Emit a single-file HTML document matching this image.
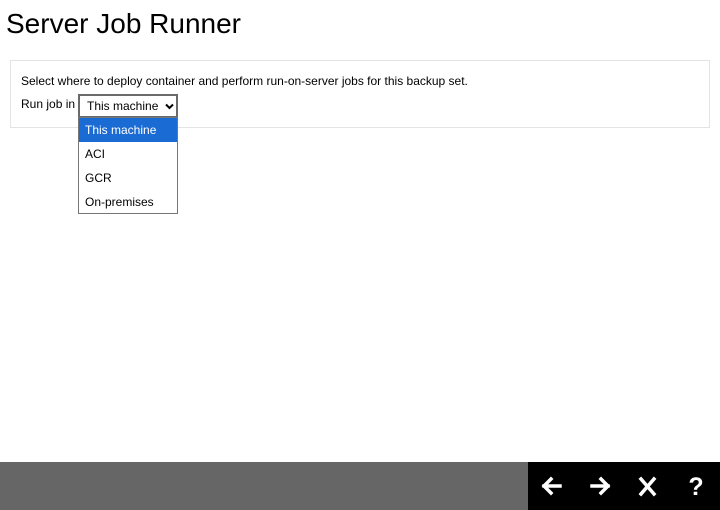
<!DOCTYPE html>
<html><head><style>
*{margin:0;padding:0;box-sizing:border-box}
body{width:720px;height:510px;background:#fff;position:relative;overflow:hidden;font-family:"Liberation Sans",Arial,sans-serif;color:#000}
.a{position:absolute;white-space:nowrap}
h1{position:absolute;left:6px;top:8px;font-size:28px;font-weight:normal;line-height:32px}
.box{position:absolute;left:10px;top:60px;width:700px;height:68px;border:1px solid #e4e4e4}
.sel{position:absolute;left:78px;top:94px;width:100px;height:24px;border:2px solid #6a6a6a;background:#fff;font-size:12px;line-height:20px;padding-left:7px}
.list{position:absolute;left:78px;top:117px;width:100px;height:97px;border:1px solid #767676;background:#fff}
.it{position:absolute;left:0;width:98px;height:24px;font-size:12px;line-height:24px;padding-left:6px}
.foot{position:absolute;left:0;top:462px;width:720px;height:48px;background:#666}
.blk{position:absolute;left:528px;top:462px;width:192px;height:48px;background:#000}
</style></head><body>
<h1>Server Job Runner</h1>
<div class="box"></div>
<div class="a" style="left:21px;top:74px;font-size:12px">Select where to deploy container and perform run-on-server jobs for this backup set.</div>
<div class="a" style="left:21px;top:97px;font-size:12px">Run job in</div>
<div class="sel">This machine<svg style="position:absolute;right:2px;top:7px" width="9" height="7" viewBox="0 0 9 7"><path d="M1 1.5L4.5 5 8 1.5" fill="none" stroke="#000" stroke-width="2"/></svg></div>
<div class="list">
<div class="it" style="top:0;background:#1a6bd4;color:#fff;">This machine</div>
<div class="it" style="top:24px">ACI</div>
<div class="it" style="top:48px">GCR</div>
<div class="it" style="top:72px">On-premises</div>
</div>
<div class="foot"></div>
<div class="blk"></div>
<svg style="position:absolute;left:528px;top:462px" width="192" height="48" viewBox="0 0 192 48">
<g fill="none" stroke="#fff" stroke-width="3.5" stroke-linecap="square">
<path d="M16 24H32M23 17L16 24L23 31"/>
<path d="M64 24H80M73 17L80 24L73 31"/>
<path d="M113 17L126 32M126 17L113 32"/>
</g>
<text x="168" y="33" font-family="Liberation Sans, sans-serif" font-size="25" font-weight="bold" fill="#fff" text-anchor="middle">?</text>
</svg>
</body></html>
